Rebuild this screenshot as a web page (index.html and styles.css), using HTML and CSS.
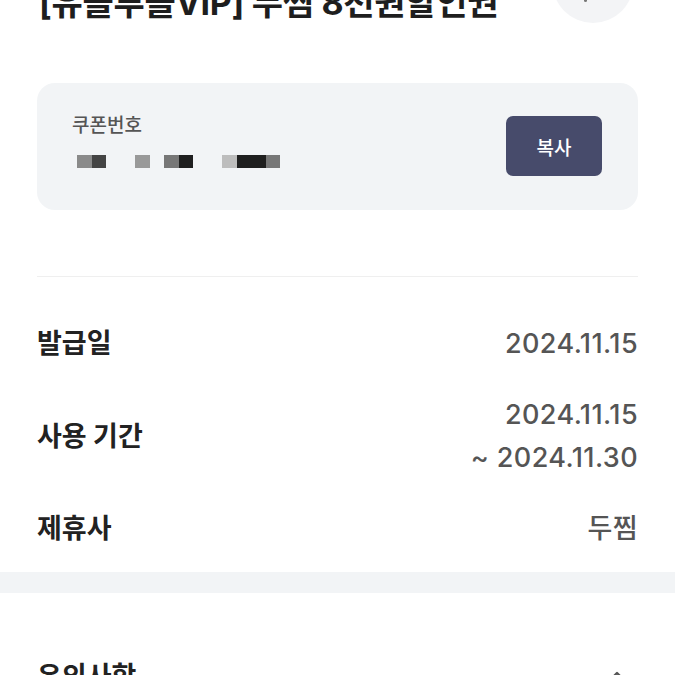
FILE: index.html
```html
<!DOCTYPE html>
<html lang="ko">
<head>
<meta charset="utf-8">
<title>쿠폰 상세</title>
<link rel="stylesheet" href="styles.css">
</head>
<body>
<div class="page">
  <header class="head">
    <h1 class="title">[유플투플VIP] 두찜 8천원할인권</h1>
    <div class="logo"><span class="logo-dot"></span></div>
  </header>

  <section class="coupon">
    <div class="coupon-info">
      <div class="coupon-label">쿠폰번호</div>
      <div class="code">
        <span class="c g1"></span><span class="c g4"></span><span class="c"></span><span class="c"></span><span class="c g2"></span><span class="c"></span><span class="c g3"></span><span class="c g5"></span><span class="c"></span><span class="c"></span><span class="c g0"></span><span class="c g5"></span><span class="c g5"></span><span class="c g3"></span>
      </div>
    </div>
    <button class="copy">복사</button>
  </section>

  <hr class="divider">

  <dl class="rows">
    <div class="row">
      <dt>발급일</dt>
      <dd>2024.11.15</dd>
    </div>
    <div class="row">
      <dt>사용 기간</dt>
      <dd>2024.11.15<br>~ 2024.11.30</dd>
    </div>
    <div class="row">
      <dt>제휴사</dt>
      <dd>두찜</dd>
    </div>
  </dl>
</div>

<div class="band"></div>

<div class="page">
  <div class="notice">
    <span class="notice-title">유의사항</span>
    <svg class="chev" width="22" height="14" viewBox="0 0 22 14"><path d="M3 11 L11 3 L19 11" fill="none" stroke="#555" stroke-width="2.4" stroke-linecap="round" stroke-linejoin="round"/></svg>
  </div>
</div>
</body>
</html>
```

FILE: styles.css
```css
html, body {
  margin: 0;
  padding: 0;
  background: #ffffff;
  overflow: hidden;
}
body {
  font-family: "Inter", "Noto Sans CJK KR", sans-serif;
  color: #222;
}
.page {
  padding: 0 37px;
}
.head {
  display: flex;
  align-items: flex-end;
  justify-content: space-between;
  margin-top: -61px;
}
.title {
  margin: 0 0 0 2px;
  font-size: 34px;
  line-height: 40px;
  font-weight: 700;
  color: #1e1e1e;
  letter-spacing: -0.3px;
  white-space: nowrap;
}
.logo {
  width: 82px;
  height: 84px;
  border-radius: 50%;
  background: #f3f4f6;
  position: relative;
  flex: none;
  margin-right: 4px;
}
.logo-dot {
  position: absolute;
  left: 32px;
  top: 60px;
  width: 3px;
  height: 3px;
  border-radius: 50%;
  background: #777;
}
.coupon {
  margin-top: 60px;
  background: #f2f4f6;
  border-radius: 18px;
  padding: 31px 36px 32px 35px;
  display: flex;
  align-items: center;
  justify-content: space-between;
}
.coupon-info {
  display: flex;
  flex-direction: column;
}
.coupon-label {
  font-size: 19px;
  line-height: 24px;
  color: #555;
  font-weight: 500;
}
.code {
  margin: 17px 0 10px 5px;
  display: grid;
  grid-template-columns: repeat(14, 14.5px);
  height: 13px;
}
.c { display: block; height: 13px; }
.g0 { background: #bdbdbd; }
.g1 { background: #8a8a8a; }
.g2 { background: #999; }
.g3 { background: #777; }
.g4 { background: #444; }
.g5 { background: #1f1f1f; }
.copy {
  width: 96px;
  height: 60px;
  border: 0;
  border-radius: 7px;
  background: #474b6b;
  color: #fff;
  font-family: "Noto Sans CJK KR", sans-serif;
  font-size: 19px;
  font-weight: 500;
}
.divider {
  margin: 66px 0 0;
  border: 0;
  height: 1px;
  background: #efefef;
}
.rows {
  margin: 31px 0 8px;
  padding: 0;
}
.row {
  display: flex;
  justify-content: space-between;
  align-items: center;
  padding: 14px 0;
}
.row dt {
  font-size: 27px;
  line-height: 43px;
  font-weight: 700;
  color: #222;
}
.row dd {
  margin: 0;
  font-size: 27px;
  line-height: 43px;
  font-weight: 500;
  color: #555;
  text-align: right;
  letter-spacing: 0.4px;
}
.band {
  height: 21px;
  background: #f2f4f6;
}
.notice {
  display: flex;
  justify-content: space-between;
  align-items: center;
  padding-top: 62px;
}
.notice-title {
  font-size: 27px;
  line-height: 43px;
  font-weight: 700;
  color: #222;
}
.chev {
  margin-right: 10px;
}
```
